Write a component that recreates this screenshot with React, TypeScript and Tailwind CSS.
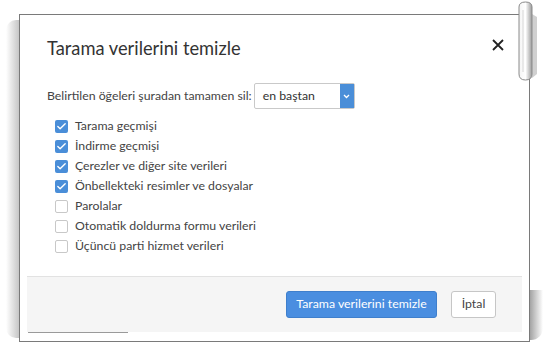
import { Check } from "lucide-react";

type Item = { label: string; checked: boolean };

const items: Item[] = [
  { label: "Tarama geçmişi", checked: true },
  { label: "İndirme geçmişi", checked: true },
  { label: "Çerezler ve diğer site verileri", checked: true },
  { label: "Önbellekteki resimler ve dosyalar", checked: true },
  { label: "Parolalar", checked: false },
  { label: "Otomatik doldurma formu verileri", checked: false },
  { label: "Üçüncü parti hizmet verileri", checked: false },
];

const CheckRow = ({ label, checked }: Item) => {
  return (
    <label className="flex items-center gap-[7px] h-[20px]">
      {checked ? (
        <span className="w-[13px] h-[13px] rounded-[2px] bg-[#4a8ed8] flex items-center justify-center">
          <Check size={11} strokeWidth={3} className="text-white" />
        </span>
      ) : (
        <span className="w-[13px] h-[13px] rounded-[2px] border border-[#c8c8c8] bg-white" />
      )}
      <span className="text-[12.3px] text-[#444]">{label}</span>
    </label>
  );
};

// ATAŞ
const PaperClip = () => (
  <svg width="26" height="84" viewBox="0 0 26 84" className="absolute left-[514px] top-0">
    <defs>
      <linearGradient id="clip" x1="0" x2="1">
        <stop offset="0" stopColor="#f4f4f4" />
        <stop offset="0.5" stopColor="#ffffff" />
        <stop offset="1" stopColor="#9a9a9a" />
      </linearGradient>
    </defs>
    <path d="M18 14 L23 17 L23 74 L18 78 Z" fill="#b0b0b0" opacity="0.6" />
    <path d="M5 7 Q5 2 11.5 2 Q18 2 18 7 L18 74 Q18 80 11.5 80 Q5 80 5 74 Z" fill="url(#clip)" stroke="#8a8a8a" strokeWidth="1" />
    <path d="M9 10 L9 72" stroke="#d6d6d6" strokeWidth="1" />
  </svg>
);

export default function App() {
  return (
    <div className="relative w-[549px] h-[342px] bg-white overflow-hidden" style={{ fontFamily: "Lato, 'Open Sans', sans-serif" }}>
      {/* sol gölge */}
      <div className="absolute left-[6px] top-[20px] w-[13px] h-[318px] bg-gradient-to-r from-transparent to-[#b8b8b8] rounded-l-[10px] opacity-80" />
      <div className="absolute left-[529px] top-[290px] w-[14px] h-[50px] bg-gradient-to-r from-[#9c9c9c] to-transparent rounded-br-[12px]" />

      <div className="relative ml-[19px] mt-[14px] w-[511px] h-[328px] border border-[#7a7a7a] bg-white px-[7px]">
        <div className="flex flex-col h-[317px]">
          <div className="flex items-start justify-between pl-[20px] pr-[18px] pt-[20px]">
            <h1 className="text-[18.3px] text-[#333] font-normal leading-[26px]">Tarama verilerini temizle</h1>
            <svg width="12" height="12" viewBox="0 0 12 12" className="mt-[4px]">
              <path d="M1 1 L11 11 M11 1 L1 11" stroke="#222" strokeWidth="1.8" />
            </svg>
          </div>

          <div className="flex items-center gap-[2px] pl-[20px] mt-[22px]">
            <span className="text-[12.3px] text-[#444]">Belirtilen öğeleri şuradan tamamen sil:</span>
            <div className="flex h-[26px] w-[101px] border border-[#c9c9c9] rounded-[2px] bg-white">
              <span className="flex-1 pl-[8px] text-[12.3px] text-[#333] leading-[24px]">en baştan</span>
              <span className="w-[14px] bg-[#4a8ed8] flex items-center justify-center">
                <svg width="7" height="5" viewBox="0 0 7 5">
                  <path d="M1 1 L3.5 3.5 L6 1" stroke="white" strokeWidth="1.3" fill="none" />
                </svg>
              </span>
            </div>
          </div>

          <div className="flex flex-col pl-[28px] mt-[7px]">
            {items.map((it) => (
              <CheckRow key={it.label} {...it} />
            ))}
          </div>

          <div className="mt-auto h-[56px] bg-[#f5f5f5] border-t border-[#e2e2e2] flex items-center justify-end gap-[14px] pr-[26px]">
            <button type="button" className="h-[27px] w-[151px] rounded-[3px] bg-[#4a8ee0] border border-[#3f7fcc] text-white text-[12.3px]">
              Tarama verilerini temizle
            </button>
            <button type="button" className="h-[27px] w-[45px] rounded-[3px] bg-white border border-[#c6c6c6] text-[#444] text-[12.3px]">
              İptal
            </button>
          </div>
        </div>
        <div className="ml-[1px] w-[100px] h-[1px] bg-[#9a9a9a]" />
      </div>

      <PaperClip />
    </div>
  );
}
